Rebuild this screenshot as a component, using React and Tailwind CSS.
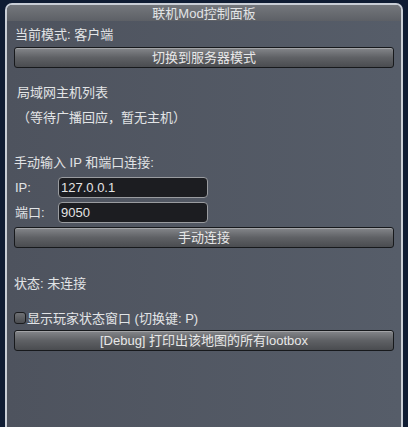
import React from "react";

const font = { fontFamily: '"Liberation Sans", "Noto Sans CJK SC", sans-serif' };

function GuiButton({ children }) {
  return (
    <button className="w-full h-[21px] rounded-[3px] border border-[#17191c] bg-gradient-to-b from-[#85878b] via-[#5f6165] to-[#4a4c50] text-[13px] leading-none text-[#e8e8e8] shadow-[inset_0_1px_0_rgba(255,255,255,0.25)]">
      {children}
    </button>
  );
}

function Field({ label, value }) {
  return (
    <div className="flex items-center h-[21px]">
      <span className="w-[44px] pl-[1px] text-[13px]">{label}</span>
      <div className="w-[150px] h-[21px] rounded-[4px] border border-[#9a9ca0] bg-[#1c1d21] px-[2px] flex items-center text-[13px] text-[#e4e4e4]">
        {value}
      </div>
    </div>
  );
}

export default function App() {
  return (
    <div className="w-[408px] h-[427px] bg-[#0f1c33] pt-[3px] px-[5px] overflow-hidden" style={font}>
      <div className="h-[440px] rounded-t-[7px] border-x-2 border-t-2 border-[#c9ced6] bg-gradient-to-r from-[#4e535e] to-[#565d69] text-[#e2e4e6] flex flex-col">
        {/* title bar */}
        <div className="h-[16px] bg-gradient-to-b from-[#74777c] to-[#5d6066] rounded-t-[5px] flex items-center justify-center text-[13px] leading-none">
          联机Mod控制面板
        </div>

        <div className="flex flex-col px-[7px] text-[13px] leading-none">
          <div className="h-[26px] flex items-center pl-[1px]">当前模式: 客户端</div>
          <GuiButton>切换到服务器模式</GuiButton>

          <div className="h-[24px] mt-[12px] flex items-center pl-[3px]">局域网主机列表</div>
          <div className="h-[24px] mt-[1px] flex items-center pl-[3px]">（等待广播回应，暂无主机）</div>

          <div className="h-[24px] mt-[21px] flex items-center">手动输入 IP 和端口连接:</div>
          <div className="flex flex-col gap-[4px] mt-[3px]">
            <Field label="IP:" value="127.0.0.1" />
            <Field label="端口:" value="9050" />
            <GuiButton>手动连接</GuiButton>
          </div>

          <div className="h-[24px] mt-[23px] flex items-center">状态: 未连接</div>

          <div className="h-[18px] mt-[14px] flex items-center gap-[1px]">
            <span className="w-[12px] h-[12px] rounded-[3px] border border-[#1a1b1e] bg-gradient-to-b from-[#6f7175] to-[#4b4d51]" />
            <span>显示玩家状态窗口 (切换键: P)</span>
          </div>
          <div className="mt-[3px]">
            <GuiButton>[Debug] 打印出该地图的所有lootbox</GuiButton>
          </div>
        </div>
      </div>
    </div>
  );
}
